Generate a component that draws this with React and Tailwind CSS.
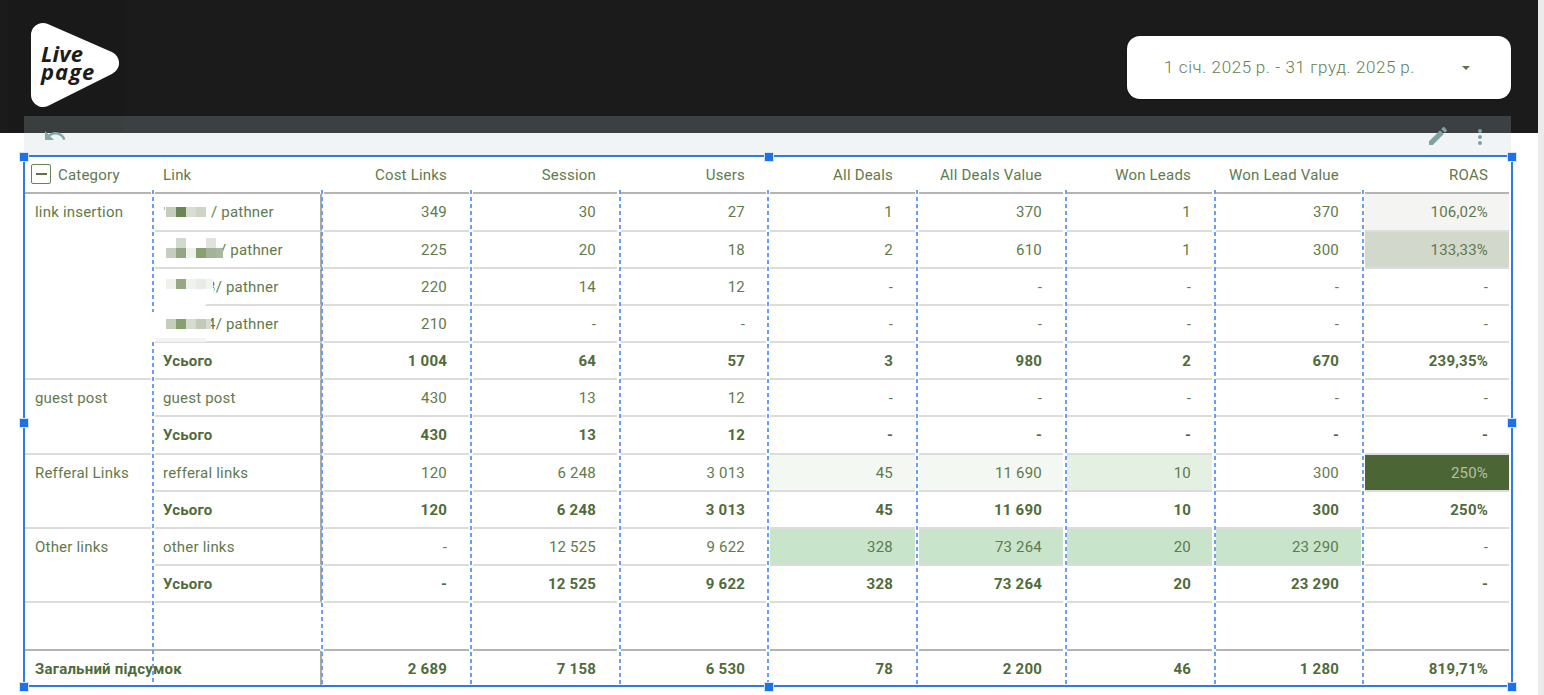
import React from 'react';

const GRID_COLS = 'grid-cols-[129px_169px_149px_148px_149px_149px_148px_149px_149px_148px]';
const GRID_ROWS = 'grid-rows-[38px_38px_37px_37px_37px_37px_37px_38px_37px_37px_37px_37px_48px_35px]';

const headers = ['Cost Links', 'Session', 'Users', 'All Deals', 'All Deals Value', 'Won Leads', 'Won Lead Value', 'ROAS'];
// right padding per numeric column
const colPad = ['pr-[22px]', 'pr-[21px]', 'pr-[21px]', 'pr-[22px]', 'pr-[21px]', 'pr-[21px]', 'pr-[22px]', 'pr-[21px]'];

const Mosaic = ({ cells }) => (
  <span className="relative z-10 flex shrink-0">
    {cells.map((c, i) => (
      <span key={i} className={`block h-[10px] ${c}`} />
    ))}
  </span>
);

const linkRows = {
  first: (
    <div className="flex items-center pl-[9px]">
      <span className="mr-[1px] mb-[8px] h-[3px] w-px bg-[#a9b69d]" />
      <Mosaic cells={['w-[10px] bg-[#c5cdbc]', 'w-[10px] bg-[#6b8553]', 'w-[10px] bg-[#d8dcd2]', 'w-[10px] bg-[#ced4c6]']} />
      <span className="ml-[5px]">/ pathner</span>
    </div>
  ),
  second: (
    <div className="flex items-center pl-[11px]">
      <span className="flex flex-col mb-[3px]">
        <Mosaic cells={['w-[10px]', 'w-[10px] bg-[#d2d9cf]', 'w-[20px]', 'w-[10px] bg-[#dfe3da]']} />
        <Mosaic cells={['w-[10px] bg-[#c5cdbc]', 'w-[10px] bg-[#94a784]', 'w-[10px] bg-[#eff2ec]', 'w-[10px] bg-[#88a071]', 'w-[10px] bg-[#a4b397]', 'w-[7px] bg-[#aab7a0]']} />
      </span>
      <span className="-ml-[3px]">/ pathner</span>
    </div>
  ),
  third: (
    <div className="flex items-center pl-[11px]">
      <span className="mb-[6px]">
        <Mosaic cells={['w-[10px] bg-[#eff2ec]', 'w-[10px] bg-[#95a785]', 'w-[10px] bg-[#eff1ed]', 'w-[10px] bg-[#e8ece5]', 'w-[7px] bg-[#f3f5f1]']} />
      </span>
      <span className="-ml-[6px]">3/ pathner</span>
    </div>
  ),
  fourth: (
    <div className="flex items-center pl-[11px]">
      <Mosaic cells={['w-[10px] bg-[#c5cdbc]', 'w-[10px] bg-[#86a070]', 'w-[10px] bg-[#d5dbd0]', 'w-[10px] bg-[#c0cbb7]', 'w-[5px] bg-[#d6dcd0]']} />
      <span className="-ml-[4px]">4/ pathner</span>
    </div>
  ),
};

// bg: tint of the heatmap cells, same order as headers
const rows = [
  { cat: 'link insertion', span: 5, link: linkRows.first, vals: ['349', '30', '27', '1', '370', '1', '370', '106,02%'], bg: { 7: 'bg-[#f4f5f2]' } },
  { link: linkRows.second, vals: ['225', '20', '18', '2', '610', '1', '300', '133,33%'], bg: { 7: 'bg-[#d2d8cc]' } },
  { link: linkRows.third, vals: ['220', '14', '12', '-', '-', '-', '-', '-'] },
  { link: linkRows.fourth, vals: ['210', '-', '-', '-', '-', '-', '-', '-'] },
  { link: 'Усього', bold: true, vals: ['1 004', '64', '57', '3', '980', '2', '670', '239,35%'] },
  { cat: 'guest post', span: 2, link: 'guest post', vals: ['430', '13', '12', '-', '-', '-', '-', '-'] },
  { link: 'Усього', bold: true, vals: ['430', '13', '12', '-', '-', '-', '-', '-'] },
  { cat: 'Refferal Links', span: 2, link: 'refferal links', vals: ['120', '6 248', '3 013', '45', '11 690', '10', '300', '250%'], bg: { 3: 'bg-[#f3f8f2]', 4: 'bg-[#f3f8f2]', 5: 'bg-[#e3f0e2]', 7: 'bg-[#4b6634] text-[#b3c2a6]' } },
  { link: 'Усього', bold: true, vals: ['120', '6 248', '3 013', '45', '11 690', '10', '300', '250%'] },
  { cat: 'Other links', span: 2, link: 'other links', vals: ['-', '12 525', '9 622', '328', '73 264', '20', '23 290', '-'], bg: { 3: 'bg-[#c8e5cb]', 4: 'bg-[#c8e5cb]', 5: 'bg-[#c8e5cb]', 6: 'bg-[#c8e5cb]' } },
  { link: 'Усього', bold: true, vals: ['-', '12 525', '9 622', '328', '73 264', '20', '23 290', '-'] },
];

const totals = ['2 689', '7 158', '6 530', '78', '2 200', '46', '1 280', '819,71%'];

const Handle = ({ className }) => (
  <span className={`absolute h-[10px] w-[10px] border border-[#d5e4fb] bg-[#1a73e8] ${className}`} />
);

const ColumnGuide = ({ className }) => (
  <span className={`absolute w-[2px] bg-[repeating-linear-gradient(to_bottom,#6a9ff5_0_4px,transparent_4px_7px)] ${className}`} />
);

const App = () => {
  return (
    <div className="flex h-[695px] w-full overflow-hidden bg-white font-[Roboto,sans-serif] text-[15px] leading-5 tracking-[0.2px] text-[#5f7a4d]">
      <div className="w-[1538px] shrink-0">
        {/* Header */}
        <header className="flex h-[133px] justify-between bg-[#1c1b1c]">
          <div className="relative ml-[8px] h-full w-[116px] bg-[#191919]">
            <svg className="absolute left-[15px] top-[15px]" width="96" height="100" viewBox="0 0 96 100">
              <path d="M20 20 L84 48 L20 80 Z" fill="#fff" stroke="#fff" strokeWidth="24" strokeLinejoin="round" />
            </svg>
            <div className="absolute left-[33px] top-[44px] font-['Open_Sans',sans-serif] text-[22px] font-bold italic leading-[18px] text-[#1c1c1c]">
              <div>Live</div>
              <div className="tracking-[1px]">page</div>
            </div>
          </div>
          <div className="mr-[27px] mt-[36px] flex h-[63px] w-[384px] items-center justify-between rounded-[13px] bg-white pl-[37px] pr-[41px] shadow-[0_1px_2px_rgba(0,0,0,0.3)]">
            <span className="mb-px text-[17px] font-light tracking-[0.6px] text-[#65804f]">1 січ. 2025{'\u2009'}р. - 31 груд. 2025{'\u2009'}р.</span>
            <span className="h-0 w-0 border-x-[4px] border-t-[4px] border-x-transparent border-t-[#5b7548]" />
          </div>
        </header>

        {/* Toolbar, lies over the bottom of the header */}
        <div className="relative -mt-[17px] ml-[24px] flex h-[40px] w-[1487px] items-start justify-between bg-[rgba(184,203,207,0.21)] pl-[19px] pr-[19px] pt-[8px]">
          <svg className="h-6 w-6 fill-[#86a9a8]" viewBox="0 0 24 24">
            <path d="M12.5 8c-2.65 0-5.05.99-6.9 2.6L2 7v9h9l-3.62-3.62c1.39-1.16 3.16-1.88 5.12-1.88 3.54 0 6.55 2.31 7.6 5.5l2.37-.78C21.08 11.03 17.15 8 12.5 8z" />
          </svg>
          <div className="flex gap-[18px]">
            <svg className="h-6 w-6 fill-[#7fa3a2]" viewBox="0 0 24 24">
              <path d="M3 17.25V21h3.75L17.81 9.94l-3.75-3.75L3 17.25zM20.71 7.04c.39-.39.39-1.02 0-1.41l-2.34-2.34c-.39-.39-1.02-.39-1.41 0l-1.83 1.83 3.75 3.75 1.83-1.83z" />
            </svg>
            <svg className="mt-[1px] h-6 w-6 fill-[#7fa3a2]" viewBox="0 0 24 24">
              <path d="M12 8c1.1 0 2-.9 2-2s-.9-2-2-2-2 .9-2 2 .9 2 2 2zm0 2c-1.1 0-2 .9-2 2s.9 2 2 2 2-.9 2-2-.9-2-2-2zm0 6c-1.1 0-2 .9-2 2s.9 2 2 2 2-.9 2-2-.9-2-2-2z" />
            </svg>
          </div>
        </div>

        {/* Table */}
        <div className="relative ml-[24px] h-[530px] w-[1488px]">
          <div className={`grid h-full ${GRID_COLS} ${GRID_ROWS}`}>
            <div className="ml-[1px] mr-[2px] flex items-center gap-[7px] border-b-2 border-[#b4b4b4] pl-[6px]">
              <span className="flex h-[20px] w-[20px] items-center justify-center rounded-[2px] border border-[#6a8259]">
                <span className="h-[2px] w-[11px] bg-[#5b7548]" />
              </span>
              <span className="mt-[2px]">Category</span>
            </div>
            <div className="mx-[2px] flex items-center border-b-2 border-[#b4b4b4] pl-[8px] pt-[2px]">Link</div>
            {headers.map((h, i) => (
              <div key={h} className={`mx-[2px] flex items-center justify-end border-b-2 border-[#b4b4b4] pt-[2px] ${colPad[i]}`}>{h}</div>
            ))}

            {rows.map((row, r) => (
              <React.Fragment key={r}>
                {row.cat && (
                  <div
                    className={`ml-[1px] mr-[2px] border-b-2 border-[#dcdcdc] pl-[10px] pt-[8px] ${row.span === 5 ? 'row-span-5' : 'row-span-2'}`}
                  >
                    {row.cat}
                  </div>
                )}
                <div className={`ml-[2px] flex items-center border-b-2 border-r-2 border-b-[#dcdcdc] border-r-[#a8a8a8] ${row.bold ? 'pl-[8px] font-bold text-[#4f6b3b]' : typeof row.link === 'string' ? 'pl-[8px]' : ''}`}>
                  {row.link}
                </div>
                {row.vals.map((v, i) => (
                  <div
                    key={i}
                    className={`mx-[2px] flex items-center justify-end border-b-2 border-[#dcdcdc] ${colPad[i]} ${row.bold ? 'font-bold text-[#4f6b3b]' : ''} ${row.bg?.[i] || ''}`}
                  >
                    {v}
                  </div>
                ))}
              </React.Fragment>
            ))}

            {/* Blank row */}
            <div className="col-span-2 ml-[1px] mr-[2px] border-b-2 border-[#b4b4b4]" />
            {headers.map((h) => (
              <div key={h} className="mx-[2px] border-b-2 border-[#b4b4b4]" />
            ))}

            {/* Grand total */}
            <div className="col-span-2 ml-[1px] flex items-center border-r-2 border-r-[#a8a8a8] pl-[10px] font-bold text-[#4f6b3b]">
              Загальний підсумок
            </div>
            {totals.map((v, i) => (
              <div key={v} className={`mx-[2px] flex items-center justify-end font-bold text-[#4f6b3b] ${colPad[i]}`}>{v}</div>
            ))}
          </div>

          {/* Smudges left by the blur on the link column */}
          <span className="absolute left-[126px] top-[132px] h-[22px] w-[64px] rounded-br-[22px] bg-white" />
          <span className="absolute left-[132px] top-[182px] h-[4px] w-[50px] bg-[#f3f3f3]" />

          {/* Selection overlay */}
          <ColumnGuide className="left-[128px] top-[34px] h-[122px]" />
          <ColumnGuide className="left-[128px] top-[186px] bottom-0" />
          <ColumnGuide className="left-[297px] top-[34px] bottom-0" />
          <ColumnGuide className="left-[446px] top-[34px] bottom-0" />
          <ColumnGuide className="left-[595px] top-[34px] bottom-0" />
          <ColumnGuide className="left-[743px] top-[34px] bottom-0" />
          <ColumnGuide className="left-[892px] top-[34px] bottom-0" />
          <ColumnGuide className="left-[1041px] top-[34px] bottom-0" />
          <ColumnGuide className="left-[1190px] top-[34px] bottom-0" />
          <ColumnGuide className="left-[1338px] top-[34px] bottom-0" />
          <div className="pointer-events-none absolute -left-px -right-px -top-px -bottom-px border-2 border-[#2f7be6]" />
          <Handle className="-left-[5px] -top-[4px]" />
          <Handle className="left-[740px] -top-[4px]" />
          <Handle className="-right-[5px] -top-[4px]" />
          <Handle className="-left-[5px] top-[262px]" />
          <Handle className="-right-[5px] top-[262px]" />
          <Handle className="-left-[5px] -bottom-[6px]" />
          <Handle className="left-[740px] -bottom-[6px]" />
          <Handle className="-right-[5px] -bottom-[6px]" />
        </div>
      </div>
      <div className="flex-1 bg-[#ebebeb]" />
    </div>
  );
};

export default App;
